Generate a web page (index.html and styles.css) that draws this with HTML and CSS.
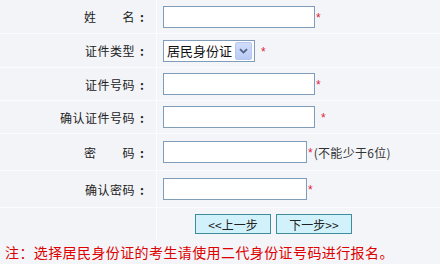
FILE: index.html
```html
<!DOCTYPE html>
<html lang="zh">
<head>
<meta charset="utf-8">
<link rel="stylesheet" href="styles.css">
</head>
<body>
<div class="page">
  <div class="form">
    <div class="label h33">姓<span class="sp"></span>名<span class="colon">:</span></div>
    <div class="field h33"><span class="input w152"></span><span class="req">*</span></div>

    <div class="label h33">证件类型<span class="colon">:</span></div>
    <div class="field h33">
      <span class="select"><span class="sel-text">居民身份证</span><span class="sel-btn"><svg width="9" height="6" viewBox="0 0 9 6"><path d="M1 1.2 L4.5 4.6 L8 1.2" fill="none" stroke="#4d6185" stroke-width="1.8"/></svg></span></span><span class="req gap6">*</span>
    </div>

    <div class="label h32">证件号码<span class="colon">:</span></div>
    <div class="field h32"><span class="input w152"></span><span class="req">*</span></div>

    <div class="label h32">确认证件号码<span class="colon">:</span></div>
    <div class="field h32"><span class="input w152"></span><span class="req gap6">*</span></div>

    <div class="label h36">密<span class="sp"></span>码<span class="colon">:</span></div>
    <div class="field h36"><span class="input w144"></span><span class="req">*</span><span class="hint">(不能少于6位)</span></div>

    <div class="label h36">确认密码<span class="colon">:</span></div>
    <div class="field h36"><span class="input w144"></span><span class="req">*</span></div>

    <div class="label h32"></div>
    <div class="field h32 btns"><button class="btn">&lt;&lt;上一步</button><button class="btn">下一步&gt;&gt;</button></div>
  </div>
  <div class="note">注：选择居民身份证的考生请使用二代身份证号码进行报名。</div>
</div>
</body>
</html>
```
FILE: styles.css
```css
html, body {
  margin: 0;
  padding: 0;
  background: #f4f5f8;
}
body {
  width: 440px;
  height: 264px;
  overflow: hidden;
  font-family: "Noto Sans CJK SC", "Noto Sans", sans-serif;
  font-size: 12px;
  color: #222;
}
.form {
  display: grid;
  grid-template-columns: 156px 1fr;
  column-gap: 1px;
  row-gap: 1px;
  background: #fbfcfd;
}
.label {
  background: #f3f4f7;
  display: flex;
  align-items: center;
  justify-content: flex-end;
  padding-right: 7px;
  letter-spacing: 0.5px;
}
.colon {
  display: inline-block;
  width: 14px;
  text-align: center;
  font-weight: bold;
  letter-spacing: 0;
}
.field {
  background: #f4f5f8;
  display: flex;
  align-items: center;
  padding-left: 6px;
}
.h33 { height: 33px; }
.h32 { height: 32px; }
.h36 { height: 36px; }
.sp { display: inline-block; width: 26px; }
.input {
  display: inline-block;
  height: 20px;
  border: 1px solid #7f9db9;
  background: #fff;
  box-sizing: content-box;
}
.w152 { width: 150px; }
.w144 { width: 142px; }
.req {
  color: #e0223a;
  font-size: 12px;
  margin-left: 1px;
  align-self: center;
  font-family: "Liberation Sans", sans-serif;
  position: relative;
  top: 1px;
}
.gap6 { margin-left: 6px; }
.hint {
  color: #333;
  margin-left: 1px;
  letter-spacing: 0.3px;
}
.select {
  display: inline-flex;
  align-items: center;
  height: 20px;
  width: 90px;
  border: 1px solid #7f9db9;
  background: #fff;
  font-size: 13px;
  color: #111;
}
.sel-text { flex: 1; padding-left: 3px; }
.sel-btn {
  width: 15px;
  height: 16px;
  margin-right: 2px;
  background: linear-gradient(#d0dcfb, #b9cbf5);
  border: 1px solid #b7c7ef;
  border-radius: 2px;
  display: flex;
  align-items: center;
  justify-content: center;
}
.btns { padding-left: 38px; gap: 5px; }
.btn {
  width: 76px;
  height: 20px;
  background: #d2f2fb;
  border: 1px solid #3f8c9a;
  font-family: "Noto Sans CJK SC", sans-serif;
  font-size: 12px;
  color: #222;
  padding: 0;
  margin: 0;
}
.note {
  color: #d00;
  font-size: 14px;
  padding: 2px 0 0 5px;
  letter-spacing: 0.4px;
  white-space: nowrap;
}
```
